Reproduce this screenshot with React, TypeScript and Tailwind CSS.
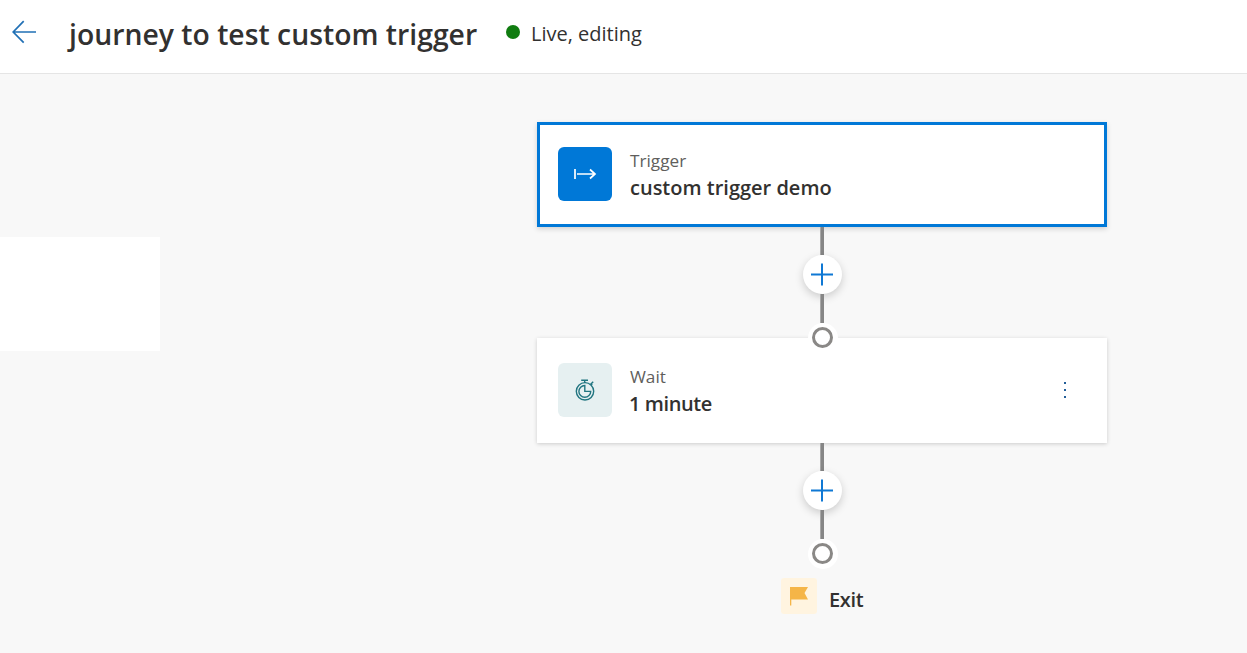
import type { ReactNode } from "react";

function Connector() {
  return (
    <div className="relative z-10 flex h-[126px] flex-col items-center">
      <div className="h-7 w-[4px] border-l border-[#a9a9a9] bg-[#868686]" />
      <button
        aria-label="Add step"
        className="flex size-[39px] shrink-0 items-center justify-center rounded-full bg-white shadow-[0_3px_8px_rgba(0,0,0,0.18)]"
      >
        <svg width="23" height="23" viewBox="0 0 23 23" stroke="#0f78d4" strokeWidth="2" fill="none">
          <path d="M11 0.5V22.5M0 11.5H22" />
        </svg>
      </button>
      <div className="h-[29px] w-[4px] border-l border-[#a9a9a9] bg-[#868686]" />
      <div className="ml-px flex size-[30px] shrink-0 items-center justify-center rounded-full bg-white pb-px">
        <div className="size-[21px] rounded-full border-3 border-[#8a8886] bg-white" />
      </div>
    </div>
  );
}

function StepText({ label, children }: { label: string; children: ReactNode }) {
  return (
    <div className="ml-[18px] flex flex-col pt-[3px] whitespace-nowrap">
      <span className="text-[17.2px] leading-[24px] text-[#605e5c]">{label}</span>
      {children}
    </div>
  );
}

export default function App() {
  return (
    <div className="flex h-[653px] w-[1247px] flex-col overflow-hidden bg-[#f8f8f8] font-['Open_Sans','Noto_Sans',sans-serif] text-[#323130]">
      <header className="flex h-[74px] shrink-0 items-start border-b border-[#e5e5e5] bg-white whitespace-nowrap">
        <svg className="mt-5 ml-3 shrink-0" width="25" height="24" viewBox="0 0 25 24" fill="none" stroke="#2170b5" strokeWidth="1.7">
          <path d="M24 12H1.5M11.7 1.2L1.2 12L11.7 22.7" />
        </svg>
        <h1 className="mt-[14px] ml-8 w-[408px] text-[28.3px] leading-[40px] font-semibold tracking-[0.02px]">
          journey to test custom trigger
        </h1>
        <span className="mt-[25px] ml-[29px] size-[14px] rounded-full bg-[#107c10]" />
        <span className="mt-[19px] ml-[11px] text-[20px] leading-[30px]">Live, editing</span>
      </header>
      <main className="flex flex-1 items-start">
        <aside className="mt-[163px] h-[114px] w-40 shrink-0 bg-white" />
        <section className="mt-12 ml-[377px] flex w-[570px] flex-col">
          <article className="flex h-[105px] items-center border-3 border-[#0078d7] bg-white pb-px pl-[18px] shadow-[0_2px_5px_rgba(0,0,0,0.16)]">
            <div className="flex size-[54px] items-center justify-center rounded-[6px] bg-[#0078d7]">
              <svg width="24" height="16" viewBox="0 0 24 16" fill="none" stroke="white" strokeWidth="1.7">
                <path d="M2 3V13M4 8H22M17 3.5L22 8L17 12.5" />
              </svg>
            </div>
            <StepText label="Trigger">
              <strong className="text-[20px] leading-[30px] font-semibold">custom trigger demo</strong>
            </StepText>
          </article>
          <Connector />
          <article className="-mt-[15px] flex h-[105px] items-center bg-white pr-[37px] pb-px pl-[21px] shadow-[0_1px_4px_rgba(0,0,0,0.18)]">
            <div className="flex size-[54px] items-center justify-center rounded-[6px] bg-[#e6f0f1]">
              <svg width="20" height="22" viewBox="0 0 20 22" fill="none" stroke="#217580" strokeWidth="1.4">
                <circle cx="10" cy="12.3" r="8.7" />
                <path d="M6.2 1.2H13M9.7 1.2V4M16 5L18.2 2.8M15.6 4.3L17.2 5.9" />
                <path d="M9.8 6.5A5.9 5.9 0 1 0 15.7 12.4H9.8Z" />
              </svg>
            </div>
            <StepText label="Wait">
              <strong className="-ml-px text-[20px] leading-[30px] font-semibold tracking-[-0.4px]">1 minute</strong>
            </StepText>
            <svg className="ml-auto" width="10" height="22" viewBox="0 0 10 22" fill="#235f99">
              <path d="M4 3h2v2H4zM4 10h2v2H4zM4 17h2v2H4z" />
            </svg>
          </article>
          <Connector />
          <div className="mt-[9px] ml-[244px] flex items-start">
            <div className="flex size-9 items-center justify-center rounded-[3px] bg-[#fff4e0]">
              <svg width="20" height="20" viewBox="0 0 20 20" fill="#f5b547">
                <path d="M1 1H19L15.5 7L19 13.5H2.3V19.5H1Z" />
              </svg>
            </div>
            <strong className="mt-[7px] ml-3 text-[20px] leading-[30px] font-semibold tracking-[-0.3px]">Exit</strong>
          </div>
        </section>
      </main>
    </div>
  );
}
